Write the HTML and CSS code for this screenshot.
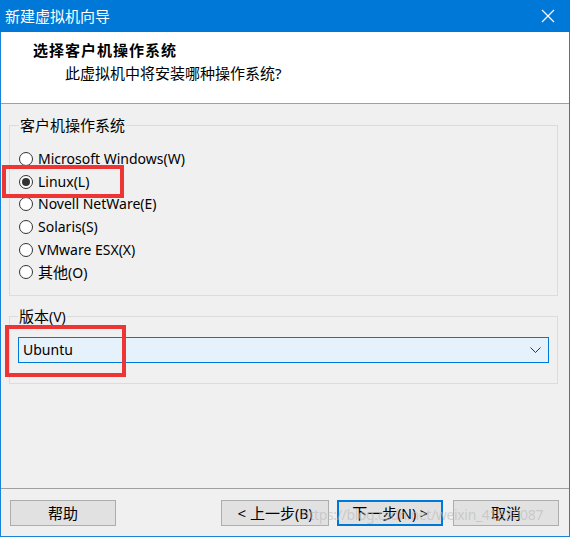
FILE: index.html
```html
<!DOCTYPE html>
<html lang="zh-CN">
<head>
<meta charset="utf-8">
<title>新建虚拟机向导</title>
<link rel="stylesheet" href="styles.css">
</head>
<body>
<div class="window">
  <div class="titlebar">
    <span class="title">新建虚拟机向导</span>
    <svg class="close" width="14" height="14" viewBox="0 0 14 14"><path d="M1 1L13 13M13 1L1 13" stroke="#fff" stroke-width="1.2" fill="none"/></svg>
  </div>
  <div class="header">
    <div class="h-title">选择客户机操作系统</div>
    <div class="h-sub">此虚拟机中将安装哪种操作系统?</div>
  </div>
  <div class="body">
    <fieldset class="group g1">
      <legend>客户机操作系统</legend>
      <div class="radio"><span class="dot"></span><span class="lat">Microsoft Windows(W)</span></div>
      <div class="radio checked"><span class="dot"></span><span class="lat">Linux(L)</span></div>
      <div class="radio"><span class="dot"></span><span class="lat">Novell NetWare(E)</span></div>
      <div class="radio"><span class="dot"></span><span class="lat">Solaris(S)</span></div>
      <div class="radio"><span class="dot"></span><span class="lat">VMware ESX(X)</span></div>
      <div class="radio"><span class="dot"></span><span>其他<span class="lat">(O)</span></span></div>
    </fieldset>
    <fieldset class="group g2">
      <legend>版本<span class="lat">(V)</span></legend>
      <div class="select">
        <span class="lat">Ubuntu</span>
        <svg class="chev" width="11" height="6" viewBox="0 0 11 6"><path d="M0.5 0.5L5.5 5.5L10.5 0.5" stroke="#333" stroke-width="1" fill="none"/></svg>
      </div>
    </fieldset>
  </div>
  <div class="footer">
    <button class="btn help">帮助</button>
    <div class="spacer"></div>
    <button class="btn prev">&lt; 上一步<span class="lat">(B)</span></button>
    <button class="btn primary">下一步<span class="lat">(N) &gt;</span></button>
    <button class="btn cancel">取消</button>
  </div>
  <div class="mark mark-linux"></div>
  <div class="mark mark-ubuntu"></div>
  <div class="watermark">https://blog.csdn.net/weixin_41530087</div>
</div>
</body>
</html>
```
FILE: styles.css
```css
* { box-sizing: border-box; }
html, body { margin: 0; padding: 0; }
body {
  width: 570px;
  height: 537px;
  font-family: "Noto Sans", "Noto Sans CJK SC", sans-serif;
  font-size: 15px;
  color: #000;
  overflow: hidden;
}
.lat { font-size: 14px; }
.window {
  position: relative;
  width: 570px;
  height: 537px;
  border: 1px solid #1883d7;
  border-top: none;
  display: flex;
  flex-direction: column;
  background: #f0f0f0;
}
.titlebar {
  height: 32px;
  margin: 0 -1px;
  background: #0078d7;
  color: #fff;
  display: flex;
  align-items: center;
  justify-content: space-between;
  padding: 0 15px 0 5px;
}
.title { font-size: 15px; line-height: 20px; }
.close { display: block; }
.header {
  height: 72px;
  background: #fff;
  border-bottom: 1px solid #a0a0a0;
  padding: 8px 0 0 32px;
}
.h-title { font-weight: bold; line-height: 20px; letter-spacing: 1px; }
.h-sub { line-height: 20px; margin-top: 3px; padding-left: 32px; }
.body {
  flex: 1;
  padding: 11px 11px 0 8px;
  display: flex;
  flex-direction: column;
  gap: 10px;
}
.group {
  margin: 0;
  border: 1px solid #dcdcdc;
  padding: 0 8px 0 9px;
  min-width: 0;
}
.group legend {
  padding: 0 1px;
  line-height: 20px;
}
.g1 { padding-top: 13px; padding-bottom: 11px; }
.radio {
  height: 22.6px;
  display: flex;
  align-items: center;
  gap: 5px;
  line-height: 20px;
}
.dot {
  width: 14px;
  height: 14px;
  border: 1px solid #333;
  border-radius: 50%;
  background: #fff;
  display: flex;
  align-items: center;
  justify-content: center;
  flex: none;
}
.checked .dot::after {
  content: "";
  width: 8px;
  height: 8px;
  border-radius: 50%;
  background: #333;
}
.g2 { padding: 10px 8px 20px 8px; }
.select {
  height: 26px;
  border: 1px solid #0078d7;
  background: #e5f1fb;
  display: flex;
  align-items: center;
  justify-content: space-between;
  padding: 0 7px 0 4px;
  line-height: 20px;
}
.chev { display: block; }
.footer {
  height: 48px;
  border-top: 1px solid #a0a0a0;
  display: flex;
  align-items: flex-start;
  padding: 11px 10px 0 9px;
}
.spacer { flex: 1; }
.btn {
  height: 26px;
  font-family: inherit;
  font-size: 15px;
  line-height: 20px;
  background: #e1e1e1;
  border: 1px solid #adadad;
  color: #000;
  padding: 0;
  width: 106px;
}
.prev { width: 108px; margin-right: 8px; }
.primary { border: 2px solid #0078d7; width: 106px; margin-right: 10px; }
.cancel { width: 106px; }
.mark {
  position: absolute;
  border: 4px solid #ee3535;
  pointer-events: none;
}
.mark-linux { left: 1px; top: 165px; width: 122px; height: 33px; }
.mark-ubuntu { left: 4px; top: 325px; width: 121px; height: 52px; }
.watermark {
  position: absolute;
  left: 300px;
  top: 505px;
  font-size: 14px;
  line-height: 20px;
  color: rgba(185, 185, 185, 0.6);
  letter-spacing: -0.35px;
  white-space: nowrap;
}
```
